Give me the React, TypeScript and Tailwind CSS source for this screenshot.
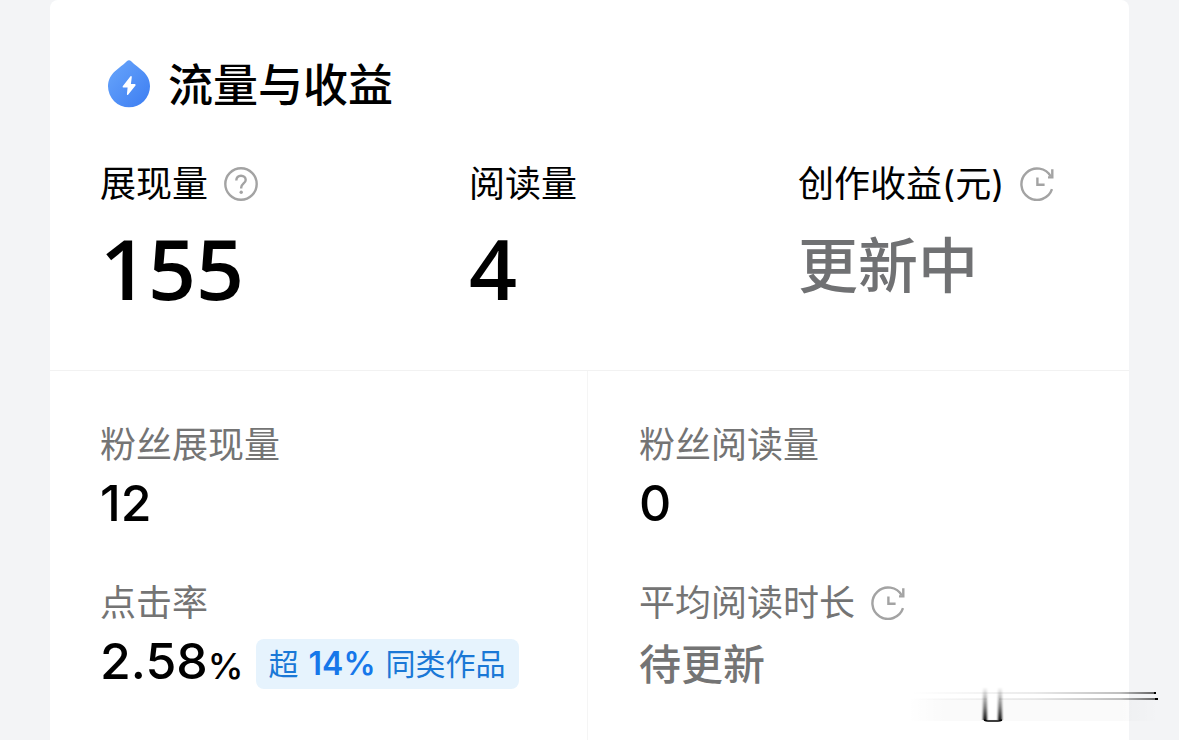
import type { ReactNode } from "react"

interface StatProps {
  label: string
  icon?: ReactNode
  children: ReactNode
}

function DropIcon() {
  return (
    <svg width="42" height="48" viewBox="0 0 42 48" aria-hidden="true">
      <defs>
        <linearGradient id="drop" x1="0" y1="0" x2="1" y2="1">
          <stop offset="0%" stopColor="#69a6fb" />
          <stop offset="100%" stopColor="#3c7df2" />
        </linearGradient>
      </defs>
      <path
        d="M18.8 1.2Q21 -.5 23.2 1.2C27 5 31 7.600 35 11.200C39.500 15 42 20.500 42 26.300A21 21 0 0 1 0 26.300C0 20.500 2.500 15 7 11.200C11 7.600 15 5 18.800 1.200Z"
        fill="url(#drop)"
      />
      <path
        d="M22.500 16.300L14.700 26.200Q14.200 27.400 15.400 27.600H19.600L18.900 34.300Q19.100 35.500 20.100 34.700L27.500 25.400Q28 24.200 26.800 24H22.900L23.800 16.900Q23.600 15.500 22.500 16.300Z"
        fill="white"
      />
    </svg>
  )
}

function HelpIcon() {
  return (
    <svg width="34" height="34" viewBox="0 0 34 34" fill="none" stroke="#a3a3a3" aria-hidden="true">
      <circle cx="17" cy="17" r="15.700" strokeWidth="2.400" />
      <path d="M12.300 13.400C12.300 10.500 14.300 8.700 17 8.700C19.800 8.700 21.700 10.500 21.700 12.900C21.700 16.300 17.200 16.600 17.200 20.600V21.400" strokeWidth="2.400" />
      <circle cx="17.200" cy="25.200" r="1.700" fill="#a3a3a3" stroke="none" />
    </svg>
  )
}

function ClockIcon() {
  return (
    <svg width="34" height="34" viewBox="0 0 34 34" fill="none" stroke="#a3a3a3" strokeWidth="2.400" aria-hidden="true">
      <path d="M32 22.200A15.700 15.700 0 1 1 30.800 9.500" />
      <path d="M32.300 2.200V10.400H28" />
      <path d="M17.400 10.400V17.700H24.600" />
    </svg>
  )
}

function Stat({ label, icon, children }: StatProps) {
  return (
    <div>
      <dt className="flex items-center gap-4 text-[36px] leading-[44px]">
        {label}
        {icon}
      </dt>
      <dd className="text-black">{children}</dd>
    </div>
  )
}

// Smeared mark in the lower right corner
function CornerMark() {
  return (
    <svg className="absolute right-5 bottom-8 h-[40px] w-[252px]" viewBox="0 0 252 40" aria-hidden="true">
      <defs>
        <linearGradient id="streak" x1="0" y1="0" x2="1" y2="0">
          <stop offset="0%" stopColor="#000" stopOpacity="0" />
          <stop offset="50%" stopColor="#000" stopOpacity="0.08" />
          <stop offset="85%" stopColor="#000" stopOpacity="0.25" />
          <stop offset="100%" stopColor="#000" stopOpacity="0.6" />
        </linearGradient>
        <linearGradient id="pillar" x1="0" y1="0" x2="0" y2="1">
          <stop offset="0%" stopColor="#000" stopOpacity="0" />
          <stop offset="60%" stopColor="#000" stopOpacity="0.5" />
          <stop offset="100%" stopColor="#000" stopOpacity="0.95" />
        </linearGradient>
        <linearGradient id="haze" x1="0" y1="0" x2="1" y2="0">
          <stop offset="0%" stopColor="#000" stopOpacity="0" />
          <stop offset="15%" stopColor="#000" stopOpacity="0.02" />
          <stop offset="85%" stopColor="#000" stopOpacity="0.02" />
          <stop offset="100%" stopColor="#000" stopOpacity="0" />
        </linearGradient>
        <filter id="soften" x="-50%" width="200%">
          <feGaussianBlur stdDeviation="0.8 0" />
        </filter>
      </defs>
      <rect x="0" y="14" width="252" height="22" fill="url(#haze)" />
      <rect x="4" y="7" width="245" height="2" fill="url(#streak)" />
      <rect x="4" y="13" width="247" height="2" fill="url(#streak)" />
      <rect x="247" y="7" width="2" height="2" fill="#000" />
      <rect x="248" y="13" width="3" height="2" fill="#000" />
      <rect x="80" y="13" width="12" height="21" fill="white" />
      <rect x="76" y="2" width="4" height="33" fill="url(#pillar)" filter="url(#soften)" />
      <rect x="91" y="2" width="4" height="33" fill="url(#pillar)" filter="url(#soften)" />
      <path d="M77 35Q79 36 81 36H91Q93 36 95 35" fill="none" stroke="#000" strokeWidth="1.500" />
    </svg>
  )
}

export default function App() {
  return (
    <main
      lang="zh-CN"
      className="relative flex min-h-screen flex-col bg-[#f3f4f6] px-[50px] font-['Inter','Noto_Sans_CJK_SC',sans-serif] text-black"
    >
      <section className="flex flex-1 flex-col rounded-t-lg bg-white">
        <div className="border-b border-[#f2f2f2] px-[50px] pt-[52px] pb-[52px]">
          <div className="flex items-center gap-[18px] pl-2">
            <DropIcon />
            <h1 className="pt-1 text-[45px] leading-[60px] font-medium">流量与收益</h1>
          </div>
          <dl className="mt-[46px] grid grid-cols-[369fr_329fr_281fr]">
            <Stat label="展现量" icon={<HelpIcon />}>
              <span className="mt-3 block font-['Open_Sans',sans-serif] text-[84px] leading-[100px] font-semibold">155</span>
            </Stat>
            <Stat label="阅读量">
              <span className="mt-3 block font-['Open_Sans',sans-serif] text-[84px] leading-[100px] font-semibold">4</span>
            </Stat>
            <Stat label="创作收益(元)" icon={<ClockIcon />}>
              <span className="mt-3 block text-[60px] leading-[96px] font-medium text-[#707173]">更新中</span>
            </Stat>
          </dl>
        </div>

        <div className="grid flex-1 grid-cols-[538fr_541fr] text-[#747474]">
          <dl className="flex flex-col gap-[42px] border-r border-[#f5f5f5] py-[52px] pl-[50px]">
            <Stat label="粉丝展现量">
              <span className="block text-[50px] leading-[72px] font-medium">12</span>
            </Stat>
            <Stat label="点击率">
              <div className="flex items-center gap-3 leading-[72px] font-medium">
                <span className="text-[50px]">
                  2.58<span className="text-[36px]">%</span>
                </span>
                <span className="flex gap-[10px] rounded-lg bg-[#e6f3fd] px-[13px] text-[30px] leading-[50px] font-normal text-[#1a78d6]">
                  超 <b className="text-[32px] font-semibold text-[#1677ea]">14%</b> 同类作品
                </span>
              </div>
            </Stat>
          </dl>
          <dl className="flex flex-col gap-[42px] py-[52px] pl-[51px]">
            <Stat label="粉丝阅读量">
              <span className="block text-[50px] leading-[72px] font-medium">0</span>
            </Stat>
            <Stat label="平均阅读时长" icon={<ClockIcon />}>
              <span className="block text-[42px] leading-[80px] font-medium text-[#747474]">待更新</span>
            </Stat>
          </dl>
        </div>
      </section>
      <CornerMark />
    </main>
  )
}
